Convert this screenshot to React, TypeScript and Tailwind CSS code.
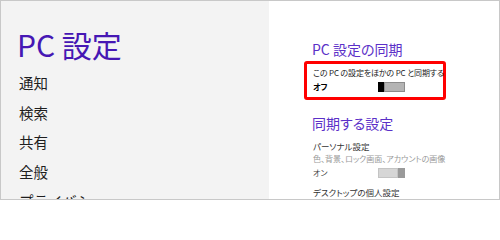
const jp = "font-['Noto_Sans_CJK_JP','Noto_Sans',sans-serif]";

const menu = ['通知', '検索', '共有', '全般', 'プライバシー'];

function ToggleOff() {
  return (
    <div className="flex h-[10px] w-[27px]">
      <div className="w-[6px] bg-black" />
      <div className="flex-1 border border-[#8c8c8c] bg-[#b4b4b4]" />
    </div>
  );
}

function ToggleOnDisabled() {
  return (
    <div className="flex h-[10px] w-[27px]">
      <div className="flex-1 border border-[#c4c4c4] bg-[#d6d6d6]" />
      <div className="w-[7px] bg-[#9a9a9a]" />
    </div>
  );
}

export default function App() {
  return (
    <div className={`flex h-[200px] w-[500px] overflow-hidden border border-[#c8c8c8] bg-white ${jp}`}>
      {/* left menu */}
      <div className="flex w-[268px] shrink-0 flex-col overflow-hidden bg-[#f3f3f3] pl-[16px] pt-[28px]">
        <div className="text-[30px] leading-[30px] text-[#4617b4]">PC 設定</div>
        <div className="mt-[9px] flex flex-col pl-[2px]">
          {menu.map((item) => (
            <div key={item} className="text-[14.5px] leading-[29.5px] text-[#1e1e1e]">
              {item}
            </div>
          ))}
        </div>
      </div>

      {/* right settings */}
      <div className="flex flex-1 flex-col overflow-hidden whitespace-nowrap pl-[35px] pt-[40px] [font-feature-settings:'palt']">
        <div className="ml-[8px] text-[14px] leading-[16px] text-[#5b30c8]">PC 設定の同期</div>

        <div className="mt-[4px] w-[142px] rounded-[3px] border-[3px] border-[#ff0000] pb-[4px] pl-[6px] pt-[3px]">
          <div className="text-[8px] leading-[12px] tracking-[-0.15px] text-[#222]">この PC の設定をほかの PC と同期する</div>
          <div className="mt-[2px] flex items-center">
            <div className="w-[65px] text-[8px] font-bold leading-[12px] text-black">オフ</div>
            <ToggleOff />
          </div>
        </div>

        <div className="ml-[8px] mt-[15px] text-[14px] leading-[16px] text-[#5b30c8]">同期する設定</div>

        <div className="ml-[9px] flex flex-col">
          <div className="mt-[9px] text-[8.5px] leading-[12px] text-[#333]">パーソナル設定</div>
          <div className="mt-[1px] text-[8px] leading-[12px] text-[#9a9a9a]">色、背景、ロック画面、アカウントの画像</div>
          <div className="mt-[2px] flex items-center">
            <div className="w-[65px] text-[8px] leading-[12px] text-[#444]">オン</div>
            <ToggleOnDisabled />
          </div>
          <div className="mt-[7px] text-[8.5px] leading-[12px] text-[#333]">デスクトップの個人設定</div>
        </div>
      </div>
    </div>
  );
}
